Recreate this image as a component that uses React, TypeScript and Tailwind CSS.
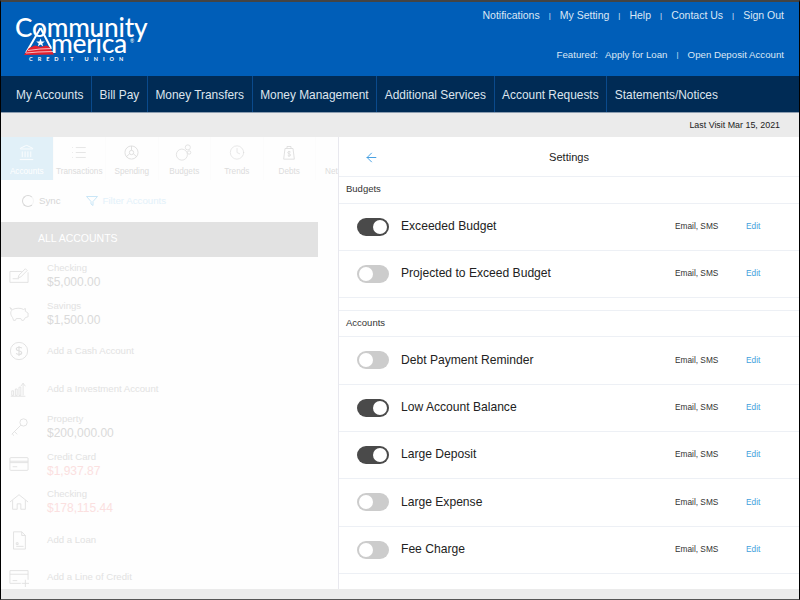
import { ArrowLeft, Clock, Landmark, List } from 'lucide-react';
import type { ReactNode } from 'react';

const topLinks = ['Notifications', 'My Setting', 'Help', 'Contact Us', 'Sign Out'];

const navItems = [
  'My Accounts',
  'Bill Pay',
  'Money Transfers',
  'Money Management',
  'Additional Services',
  'Account Requests',
  'Statements/Notices',
];

function Logo() {
  return (
    <div className="relative w-[140px] h-[52px] text-white font-['Lato',sans-serif] font-medium select-none">
      <span className="absolute left-[0px] top-[1px] text-[26.200px] leading-[16px] tracking-[-0.2px]">Community</span>
      <span className="absolute left-[36px] top-[17px] text-[26.400px] leading-[16px] tracking-[-0.3px]">merica</span>
      <span className="absolute left-[115px] top-[20px] text-[5px] leading-[6px]">®</span>
      <svg className="absolute left-[8px] top-[8px]" width="36" height="30" viewBox="0 0 36 30">
        <path d="M17.500 2 L3 27" stroke="#fff" strokeWidth="2" fill="none" />
        <path d="M17.500 2 L28 22" stroke="#fff" strokeWidth="2" fill="none" />
        <path d="M17.500 12.500l1.100 3h3.200l-2.500 1.900.9 3-2.700-1.800-2.700 1.800.9-3-2.500-1.900h3.200z" fill="#fff" />
        <path d="M6 22l6-2.500 5.500 1.500 6-1.500 3 1.500 4.500 7.500-30 .500z" fill="#e4202e" />
        <path d="M5 24.500l12-1.500 12-.500M3 27l12-1 16-.500" stroke="#fff" strokeWidth="0.700" fill="none" />
      </svg>
      <span className="absolute left-[14px] top-[38px] text-[5.500px] leading-[7px] font-bold tracking-[5px] whitespace-nowrap">CREDIT UNION</span>
    </div>
  );
}

function TabIcon({ name }: { name: string }) {
  if (name === 'Accounts') return <Landmark className="w-[17px] h-[17px] text-white" strokeWidth={1.2} />;
  if (name === 'Transactions') return <List className="w-[20px] h-[17px]" strokeWidth={1} />;
  if (name === 'Trends') return <Clock className="w-[16px] h-[17px]" strokeWidth={1} />;
  if (name === 'Spending')
    return (
      <svg className="w-[15px] h-[17px]" viewBox="0 0 24 24" fill="none" stroke="currentColor" strokeWidth="1.400">
        <circle cx="12" cy="12" r="10.500" />
        <circle cx="12" cy="12" r="3.500" />
        <path d="M12 1.500v7M9 14l-5.500 5M15 14l5.500 5" />
      </svg>
    );
  if (name === 'Budgets')
    return (
      <svg className="w-[18px] h-[17px]" viewBox="0 0 20 20" fill="none" stroke="currentColor" strokeWidth="0.900">
        <circle cx="7.500" cy="12.500" r="6.500" />
        <circle cx="14.500" cy="4" r="3" />
        <circle cx="16" cy="10" r="2" />
      </svg>
    );
  if (name === 'Debts')
    return (
      <svg className="w-[16px] h-[17px]" viewBox="0 0 24 24" fill="none" stroke="currentColor" strokeWidth="1.300">
        <path d="M6 6h12l2 16H4zM9 6V3h6v3" />
        <path d="M14.500 11.500c-.500-1-4.500-1.500-4.500.700 0 2.300 4.500 1.300 4.500 3.500 0 2.200-4 1.800-4.500.500M12 9.500v9" />
      </svg>
    );
  return (
    <svg className="w-[17px] h-[17px] ml-[11px]" viewBox="0 0 24 24" fill="none" stroke="currentColor" strokeWidth="1.200">
      <circle cx="10" cy="14" r="3" />
    </svg>
  );
}

const tabs = ['Accounts', 'Transactions', 'Spending', 'Budgets', 'Trends', 'Debts', 'Net'];

function AccountIcon({ children }: { children: ReactNode }) {
  return (
    <svg className="w-[20px] h-[20px]" viewBox="0 0 22 22" fill="none" stroke="currentColor" strokeWidth="1">
      {children}
    </svg>
  );
}

type Row = { icon: ReactNode; label: string; value?: string; red?: boolean };

const accounts: Row[] = [
  {
    icon: (
      <AccountIcon>
        <path d="M14 6H1v12h20V7M4 14h7" />
        <path d="M10 13l1-3 7-7 2 2-7 7z" />
      </AccountIcon>
    ),
    label: 'Checking',
    value: '$5,000.00',
  },
  {
    icon: (
      <AccountIcon>
        <path d="M1 4l3 2c3-1.500 9-2 12 0l2-1v3l3 2v4l-3 1-2 3h-2l-1-2H8l-1 2H5l-1-3C2 13 1 9 3 7z" />
      </AccountIcon>
    ),
    label: 'Savings',
    value: '$1,500.00',
  },
  {
    icon: (
      <AccountIcon>
        <circle cx="11" cy="11" r="9.500" />
        <path d="M14 8c-.500-1.500-6-1.800-6 .800 0 2.700 6 1.300 6 4 0 2.600-5.500 2.300-6 .500M11 5.500v11" strokeWidth="1.300" />
      </AccountIcon>
    ),
    label: 'Add a Cash Account',
  },
  {
    icon: (
      <AccountIcon>
        <path d="M2 19h16M3 13h2v5H3zM7 11h2v7H7zM11 9h2v9h-2zM15.500 5v13M13 8l2.500-3.500L18 8" strokeWidth="0.900" />
      </AccountIcon>
    ),
    label: 'Add a Investment Account',
  },
  {
    icon: (
      <AccountIcon>
        <circle cx="16" cy="6" r="4" />
        <path d="M13 9L3 19M6 16l3 3M3.500 18.500l2 2" />
      </AccountIcon>
    ),
    label: 'Property',
    value: '$200,000.00',
  },
  {
    icon: (
      <AccountIcon>
        <rect x="1" y="4" width="20" height="14" rx="1" />
        <path d="M1 8h20M1 9.500h20M4 14h5" />
      </AccountIcon>
    ),
    label: 'Credit Card',
    value: '$1,937.87',
    red: true,
  },
  {
    icon: (
      <AccountIcon>
        <path d="M1 11l10-8 10 8M4 9v10h5v-6h4v6h5V9" />
      </AccountIcon>
    ),
    label: 'Checking',
    value: '$178,115.44',
    red: true,
  },
  {
    icon: (
      <AccountIcon>
        <path d="M5 2h9l4 4v15H5zM14 2v4h4M8 14h2v2H8zM8 18h8" />
      </AccountIcon>
    ),
    label: 'Add a Loan',
  },
  {
    icon: (
      <AccountIcon>
        <path d="M13 18H1V4h20v10M1 8h20M4 15h5M14 18h8M18 14v8" />
      </AccountIcon>
    ),
    label: 'Add a Line of Credit',
  },
];

function Toggle({ on }: { on: boolean }) {
  return (
    <span
      className={`flex w-[32px] h-[18px] rounded-full p-[2px] ${
        on ? 'bg-[#4a4a4a] justify-end' : 'bg-[#cccccc] justify-start'
      }`}
    >
      <span className="w-[14px] h-[14px] rounded-full bg-white" />
    </span>
  );
}

function SettingRow({ label, on, className }: { label: string; on: boolean; className: string }) {
  return (
    <div className={`flex items-center pl-[18px] pr-[14px] pb-[1px] border-b border-[#edf0f5] ${className}`}>
      <Toggle on={on} />
      <span className="ml-[12px] text-[12.100px] text-[#222222] flex-1">{label}</span>
      <span className="w-[71px] text-[8.300px] text-[#333333]">Email, SMS</span>
      <span className="w-[39px] text-[8.300px] text-[#3f9fdc]">Edit</span>
    </div>
  );
}

export default function App() {
  return (
    <div className="w-[800px] h-[600px] overflow-hidden flex flex-col bg-white border-x border-black border-t-2 border-t-[#444444] border-b border-b-[#555555] font-['Liberation_Sans',Arial,sans-serif]">
      <header className="h-[74px] shrink-0 bg-[#005eb8] flex justify-between pl-[14px] pr-[15px] text-[#dbe7f5]">
        <div className="pt-[16px]">
          <Logo />
        </div>
        <div className="flex flex-col items-end pt-[7px] text-[10.500px]">
          <div className="flex items-center h-[14px]">
            {topLinks.map((link, i) => (
              <span key={link} className="flex items-center">
                {i > 0 && <span className="mx-[9px] text-[8px]">|</span>}
                {link}
              </span>
            ))}
          </div>
          <div className="flex items-center h-[14px] mt-[25px] text-[9.700px]">
            <span className="mr-[7px]">Featured:</span>
            <span>Apply for Loan</span>
            <span className="mx-[9px] text-[8px]">|</span>
            <span>Open Deposit Account</span>
          </div>
        </div>
      </header>

      <nav className="h-[37px] shrink-0 bg-[#002b55] flex border-b border-[#8c9db0] pl-[7.400px] text-[11.900px] text-[#dde5ee]">
        {navItems.map((item) => (
          <div
            key={item}
            className="h-full flex items-center pt-[3px] px-[7.600px] whitespace-nowrap border-r border-[#0a4a8c] last:border-r-0"
          >
            {item}
          </div>
        ))}
      </nav>

      <div className="h-[24px] shrink-0 bg-[#ebebeb] flex items-center justify-end pt-[1px] pr-[19px] text-[8.900px] text-[#222222]">
        Last Visit Mar 15, 2021
      </div>

      <main className="flex-1 min-h-0 flex">
        <section className="w-[338px] shrink-0 border-r border-[#e8e8ee] overflow-hidden bg-[#fefefe]">
          <div className="flex h-[43px] text-[#dcdcdc] overflow-hidden">
            {tabs.map((tab) => (
              <div
                key={tab}
                className={`w-[52.500px] shrink-0 flex flex-col justify-center gap-[5px] pt-[4px] text-[8.200px] leading-[12px] whitespace-nowrap border-r border-[#fcfcfc] ${
                  tab === 'Accounts' ? 'bg-[#e1f0f8] text-white' : ''
                } ${tab === 'Net' ? 'items-start pl-[9px]' : 'items-center'}`}
              >
                <TabIcon name={tab} />
                <span>{tab}</span>
              </div>
            ))}
          </div>
          <div className="flex items-center h-[42px] pl-[21px] text-[9.700px]">
            <span className="w-[12px] h-[12px] rounded-full border border-[#d8d8d8] border-r-[#f4f4f4]" />
            <span className="ml-[5px] text-[#d6d6d6]">Sync</span>
            <svg className="w-[12px] h-[12px] ml-[25px] text-[#c9e6f7]" viewBox="0 0 12 12" fill="none" stroke="currentColor" strokeWidth="1">
              <path d="M.5 1.500h11L7 6.500v4l-2-1.500V6.500z" />
            </svg>
            <span className="ml-[5px] text-[#e3f1fa]">Filter Accounts</span>
          </div>
          <div className="w-[317px] h-[35px] bg-[#e2e2e2] flex items-center pb-[1px] pl-[37px] text-[10.500px] text-white">
            ALL ACCOUNTS
          </div>
          <div className="w-[317px] flex flex-col">
            {accounts.map((a, i) => (
              <div key={i} className="h-[37.700px] shrink-0 flex items-center pl-[8px] text-[#e0e0e0]">
                <span className="w-[38px] shrink-0 flex">{a.icon}</span>
                <div className="flex flex-col">
                  <span className="text-[9.600px] leading-[12px] text-[#e2e2e2]">{a.label}</span>
                  {a.value && (
                    <span className={`text-[12px] leading-[14px] mt-[1px] ${a.red ? 'text-[#fbe0e0]' : 'text-[#dadada]'}`}>{a.value}</span>
                  )}
                </div>
              </div>
            ))}
          </div>
        </section>

        <section className="flex-1 min-w-0 flex flex-col">
          <div className="h-[40px] shrink-0 border-b border-[#edf0f5] flex items-center relative pt-[2px]">
            <ArrowLeft className="w-[15px] h-[15px] ml-[25px] text-[#3d9be0]" strokeWidth={1.500} />
            <span className="absolute left-[210px] top-[13px] leading-[14px] text-[11.100px] text-[#222222]">Settings</span>
          </div>
          <div className="h-[27px] shrink-0 border-b border-[#edf0f5] flex items-center pb-[1px] pl-[7px] text-[9.500px] text-[#333333]">Budgets</div>
          <SettingRow label="Exceeded Budget" on className="h-[47px] shrink-0" />
          <SettingRow label="Projected to Exceed Budget" on={false} className="h-[47px] shrink-0" />
          <div className="h-[13px] shrink-0 bg-white border-b border-[#edf0f5]" />
          <div className="h-[26px] shrink-0 border-b border-[#edf0f5] flex items-center pb-[1px] pl-[7px] text-[9.500px] text-[#333333]">Accounts</div>
          <SettingRow label="Debt Payment Reminder" on={false} className="h-[48px] shrink-0" />
          <SettingRow label="Low Account Balance" on className="h-[47px] shrink-0" />
          <SettingRow label="Large Deposit" on className="h-[47px] shrink-0" />
          <SettingRow label="Large Expense" on={false} className="h-[48px] shrink-0" />
          <SettingRow label="Fee Charge" on={false} className="h-[47px] shrink-0" />
        </section>
      </main>

      <div className="h-[10px] shrink-0 bg-[#ebebeb]" />
    </div>
  );
}
